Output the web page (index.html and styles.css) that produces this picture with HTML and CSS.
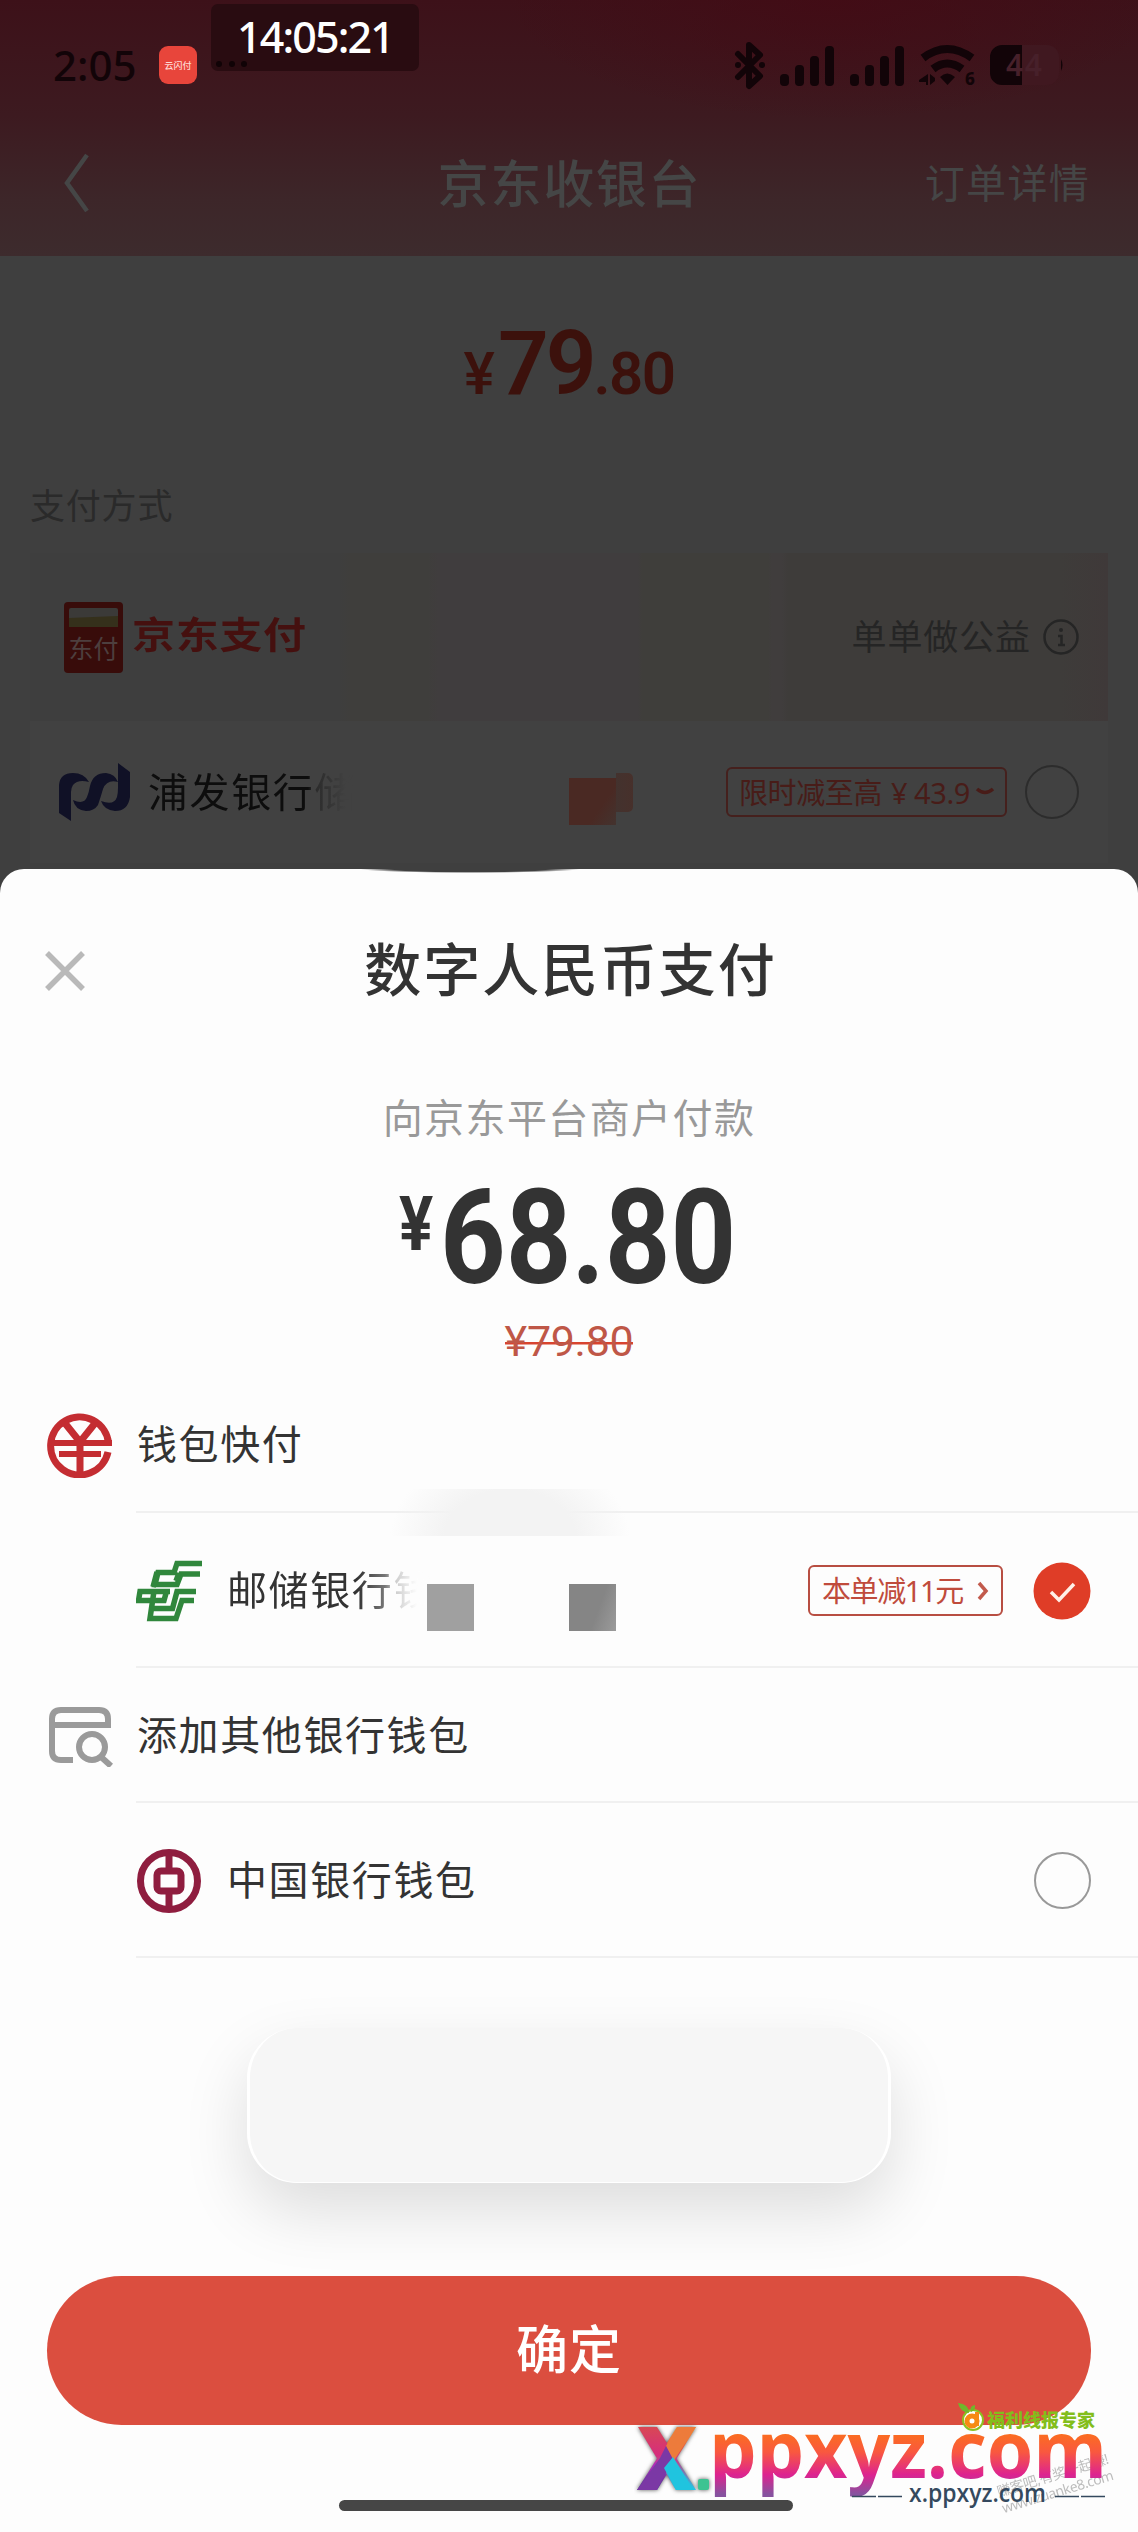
FILE: index.html
```html
<!DOCTYPE html>
<html lang="zh-CN">
<head>
<meta charset="utf-8">
<title>数字人民币支付</title>
<link rel="stylesheet" href="styles.css">
</head>
<body>
<main class="screen">
  <header class="top">
    <div class="status">
      <span class="status-time">2:05</span>
      <span class="app-badge">云闪付</span>
      <svg class="status-icons" width="332" height="50" viewBox="733 40 332 50" fill="#120408">
        <path d="M738 54l22 22-11 10V45l11 10-22 22" fill="none" stroke="#120408" stroke-width="6" stroke-linejoin="round" stroke-linecap="round"/>
        <circle cx="738" cy="65" r="3"/><circle cx="762" cy="65" r="3"/>
        <rect x="780" y="74" width="9" height="12" rx="4"/><rect x="795" y="65" width="9" height="21" rx="4"/><rect x="810" y="56" width="9" height="30" rx="4"/><rect x="825" y="46" width="9" height="40" rx="4"/>
        <rect x="850" y="74" width="9" height="12" rx="4"/><rect x="865" y="65" width="9" height="21" rx="4"/><rect x="880" y="56" width="9" height="30" rx="4"/><rect x="895" y="46" width="9" height="40" rx="4"/>
        <path d="M923 58q24-18 49 0M933 69q14-11 29 0" fill="none" stroke="#120408" stroke-width="8"/>
        <path d="M940 77q7-7 15 0l-7.500 8zM928 74v11h-2v-3h-7v-2zM930 74l5 4v-2l0 5-5 4z"/>
        <text x="965" y="85" font-size="17" font-weight="800">6</text>
        <rect x="990" y="45" width="69" height="40" rx="12" fill="#401820"/>
        <path d="M1022 45h-20a12 12 0 0 0-12 12v16a12 12 0 0 0 12 12h20zM1061 59q3 6 0 12z"/>
        <text x="1006" y="76" font-size="30" font-weight="600" fill="#47202a" textLength="36">44</text>
      </svg>
      <div class="clock">14:05:21</div>
      <svg class="dots" width="34" height="8" viewBox="0 0 34 8"><circle cx="4" cy="4" r="3"/><circle cx="17" cy="4" r="3"/><circle cx="29" cy="4" r="3"/></svg>
    </div>
    <nav class="nav">
      <svg class="back" width="30" height="62" viewBox="0 0 30 62"><path d="M25 3L5 31l20 28"/></svg>
      <h1>京东收银台</h1>
      <span class="nav-link">订单详情</span>
    </nav>
  </header>

  <div class="total"><span class="total-sign">¥</span><span class="total-int">79</span><span class="total-dec">.80</span></div>
  <div class="section-label">支付方式</div>

  <section class="methods">
    <div class="method jd">
      <svg class="jd-card" width="59" height="71" viewBox="0 0 59 71">
        <rect width="59" height="71" rx="4" fill="#380c0a"/>
        <rect x="5" y="6" width="49" height="19" rx="2" fill="#3b3a38"/><path d="M5 16l49-2v11H5z" fill="#35301b"/>
        <text x="4.500" y="56" font-size="25" fill="#4d3f3e" textLength="50">东付</text>
      </svg>
      <span class="jd-name">京东支付</span>
      <span class="charity">单单做公益</span>
      <svg class="info" width="38" height="38" viewBox="0 0 38 38"><circle cx="19" cy="19" r="16.500"/><path d="M16 18h3.500v8M16 27h7"/><circle class="info-dot" cx="19" cy="12" r="2"/></svg>
    </div>
    <div class="method spd">
      <svg class="spd-logo" width="72" height="60" viewBox="0 0 72 60" fill="#101126">
        <path d="M0 23Q1 11 14 11Q25 11 30 20Q19 17 14 23Q12 26 12 30V59L0 51z"/>
        <path d="M31 24Q34 11 47 11Q56 12 59 20Q48 17 44 27Q42 34 39 43Q35 49 27 49Q16 48 14 38Q25 43 28 35Q30 30 31 24z"/>
        <path d="M59 1l12 9v25Q69 49 56 49Q45 48 42 39Q55 44 58 35Q59 31 59 26z"/>
      </svg>
      <span class="spd-name">浦发银行储</span>
      <i class="smudge"></i>
      <span class="promo-dim">限时减至高<b>¥</b>43.9<svg width="20" height="12" viewBox="0 0 20 12"><path d="M2 3q8 7 16 0"/></svg></span>
      <i class="radio radio-dim"></i>
    </div>
  </section>

  <section class="sheet">
    <header class="sheet-head">
      <svg class="close" width="42" height="42" viewBox="0 0 42 42"><path d="M3 3l36 36M39 3L3 39"/></svg>
      <h2>数字人民币支付</h2>
    </header>
    <p class="payee">向京东平台商户付款</p>
    <div class="amount"><span class="amount-sign">¥</span><span class="amount-num">68.80</span></div>
    <div class="old"><span>¥79.80</span></div>

    <div class="row group quick">
      <svg class="logo" width="66" height="66" viewBox="0 0 66 66" fill="none" stroke="#c42d32">
        <path d="M61.500 31A29 29 0 1 0 61 40" stroke-width="7"/>
        <path d="M7 31h58M12 42h42" stroke-width="6"/><path d="M17 10l16 20L49 10M33 28v34" stroke-width="7"/>
      </svg>
      <span>钱包快付</span>
    </div>
    <div class="row bank psbc">
      <svg class="logo" width="66" height="62" viewBox="0 0 66 62" fill="none" stroke="#30873c" stroke-width="5.500">
        <path d="M66 3.500H41L38 12.500H22L19 24.500H41L45 14H64"/>
        <path d="M21 12l-4 15M40 21l3-8"/>
        <path d="M34 31.500H4L2.500 40.500H28L30.500 31.500M18 31l-4 27.500H40L46 40.500H58M60 31.500H41L36.500 48.500H17"/>
      </svg>
      <span class="psbc-name">邮储银行钱</span>
      <i class="haze"></i><i class="block block-a"></i><i class="block block-b"></i>
      <span class="promo">本单减11元<svg width="14" height="22" viewBox="0 0 14 22"><path d="M3 3l7 8-7 8"/></svg></span>
      <svg class="checked" width="58" height="58" viewBox="0 0 58 58"><circle cx="29" cy="29" r="28.500" fill="#df3d27"/><path d="M18 30l8 8 15-16" fill="none" stroke="#fff0e8" stroke-width="3.500"/></svg>
    </div>
    <div class="row group add">
      <svg class="logo" width="66" height="62" viewBox="0 0 66 62" fill="none" stroke="#9a9a9a" stroke-width="6">
        <path d="M26 55H14Q5 55 5 46V14Q5 5 14 5H52Q61 5 61 14V20H5"/><circle cx="45" cy="42" r="13"/><path d="M53 51l11 10"/>
      </svg>
      <span>添加其他银行钱包</span>
    </div>
    <div class="row bank boc">
      <svg class="logo" width="66" height="66" viewBox="0 0 66 66" fill="none" stroke="#8f1d3f">
        <circle cx="33" cy="33" r="28.500" stroke-width="7"/><rect x="21" y="23" width="24" height="20" rx="4" stroke-width="7"/><path d="M33 6v16M33 44v16" stroke-width="7"/>
      </svg>
      <span>中国银行钱包</span>
      <i class="radio"></i>
    </div>

    <div class="toast"></div>
    <button class="confirm">确定</button>
    <div class="home-bar"></div>
  </section>

  <svg class="stamp" width="504" height="140" viewBox="634 2392 504 140">
    <defs>
      <linearGradient id="brand" x1="0" y1="2434" x2="0" y2="2494" gradientUnits="userSpaceOnUse"><stop offset="0" stop-color="#fb6d20"/><stop offset=".3" stop-color="#f9583f"/><stop offset=".68" stop-color="#dd2390"/><stop offset="1" stop-color="#87529f"/></linearGradient>
      <linearGradient id="x-left" x1="0" y1="0" x2="0" y2="1"><stop offset="0" stop-color="#d84854"/><stop offset=".45" stop-color="#d62d7e"/><stop offset="1" stop-color="#20c8e8"/></linearGradient>
      <linearGradient id="x-right" x1="0" y1="0" x2="0" y2="1"><stop offset="0" stop-color="#ecb43a"/><stop offset=".35" stop-color="#ed493e"/><stop offset=".6" stop-color="#b22bbd"/><stop offset="1" stop-color="#453a91"/></linearGradient>
    </defs>
    <g class="tilted" transform="translate(999 2498) rotate(-17)"><text x="0" y="-1" textLength="116">赚客吧,有奖一起赚!</text><text x="0" y="16" textLength="116">www.zuanke8.com</text></g>
    <g class="mark-x">
      <path d="M677 2427h19l-39 63h-20z" fill="url(#x-right)"/><path d="M638 2427h19l39 63h-20z" fill="url(#x-left)"/>
      <path d="M677 2427h19l-23 35-7-16z" fill="#ed7b3b"/><path d="M666 2446l7 13-16 31h-20l23-32z" fill="#7b38a5"/><path d="M673 2457l21 33h-18l-12-22z" fill="#20c4df"/>
      <rect x="698" y="2479" width="11" height="11" rx="2" fill="#3dc392"/>
    </g>
    <text class="brand" x="709" y="2478" font-size="78" textLength="398" lengthAdjust="spacingAndGlyphs" fill="url(#brand)">ppxyz.com</text>
    <path d="M852 2496.500h24m2 0h24M1055 2496.500h24m2 0h24" stroke="#34495e" stroke-width="1.500"/>
    <text class="site" x="909" y="2502" font-size="25" textLength="137" lengthAdjust="spacingAndGlyphs">x.ppxyz.com</text>
    <circle cx="973" cy="2420" r="10" fill="#fff" stroke="#8bc220" stroke-width="2"/><circle cx="972" cy="2421" r="5" fill="none" stroke="#f78a13" stroke-width="5"/><path d="M977 2412v14" stroke="#f78a13" stroke-width="4"/>
    <path d="M958 2403q11 1 11 10-9-1-11-10zM971 2412q-2-6 4-7 1 5-4 7z" fill="#70b72b"/>
    <text class="guild" x="987" y="2427" font-size="18" textLength="108">福利线报专家</text>
  </svg>
</main>
</body>
</html>
```
FILE: styles.css
```css
* { box-sizing: border-box; }
body { margin: 0; }
h1, h2, p { margin: 0; font-weight: 400; }
i, b { font-style: normal; font-weight: 400; }
svg { display: block; flex: none; }

.screen {
  position: relative;
  width: 1138px;
  height: 2532px;
  overflow: hidden;
  background: #3f3f3f;
  color: #333;
  font-family: "Noto Sans", "Noto Sans CJK SC", sans-serif;
  line-height: 1;
  white-space: nowrap;
}

/* dimmed cashier page */
.top {
  height: 256px;
  background:
    radial-gradient(ellipse 330px 120px at 834px 0, rgba(68, 10, 20, .7), transparent),
    linear-gradient(#3d1119, #3d1a20 45%, #3d2629 78%, #3d2b2d);
}
.status {
  position: relative;
  display: flex;
  align-items: center;
  height: 110px;
  padding: 20px 73px 0 53px;
}
.status-time { width: 106px; color: #120408; font-size: 42px; font-weight: 500; }
.app-badge {
  width: 38px;
  height: 38px;
  border-radius: 9px;
  background: #e8453b;
  color: #ffd9d4;
  font-size: 9px;
  font-weight: 500;
  line-height: 39px;
  text-align: center;
}
.status-icons { margin-left: auto; }
.clock {
  position: absolute;
  left: 211px;
  top: 4px;
  width: 208px;
  height: 67px;
  border-radius: 7px;
  background: #290c11;
  color: #fff;
  font-size: 43px;
  font-weight: 500;
  letter-spacing: -1.9px;
  line-height: 66px;
  text-align: center;
}
.dots { position: absolute; left: 215px; top: 60px; fill: #100306; }
.nav {
  display: grid;
  grid-template-columns: 220px 1fr 220px;
  align-items: center;
  height: 146px;
  padding: 0 48px 0 62px;
  color: #454646;
}
.back path { fill: none; stroke: #454646; stroke-width: 4.5; }
.nav h1 { font-size: 51px; font-weight: 500; letter-spacing: 1.7px; text-align: center; padding-right: 13px; }
.nav-link { font-size: 40px; letter-spacing: 1.3px; text-align: right; }

.total {
  display: flex;
  align-items: baseline;
  justify-content: center;
  height: 190px;
  padding-top: 63px;
  color: #3c110c;
  font-family: Roboto, sans-serif;
  font-weight: 600;
}
.total-sign { font-size: 59px; font-weight: 500; }
.total-int { font-size: 89px; margin-left: 3px; letter-spacing: -3px; }
.total-dec { font-size: 60px; letter-spacing: -1.6px; }
.section-label {
  height: 107px;
  padding: 42px 30px 0;
  color: #2a2a2a;
  font-size: 35px;
  letter-spacing: .8px;
}
.methods { margin: 0 30px; height: 330px; }
.method { display: flex; align-items: center; }
.jd {
  height: 168px;
  padding: 0 28px 0 34px;
  background: linear-gradient(90deg, #3e3e3e 0 309px, #3f3e3c 320px 398px, #403d3e 408px 608px, #3f3e3b 612px 738px, #403d3d 742px 752px, #3e3c3a 758px 1030px, #3f3939);
}
.jd-name {
  margin: -5px 0 0 9px;
  color: #45100f;
  font-size: 43px;
  font-weight: 700;
  letter-spacing: .7px;
  transform: scaleY(.86);
}
.charity { margin: -2px 0 0 auto; color: #252525; font-size: 35px; letter-spacing: .9px; }
.info { margin-left: 11px; fill: none; stroke: #252525; stroke-width: 2.5; }
.info .info-dot { fill: #252525; stroke: none; }
.spd { position: relative; height: 142px; padding: 0 29px; background: #414141; }
.spd-name {
  margin-left: 17px;
  font-size: 40px;
  letter-spacing: 1.6px;
  color: transparent;
  background: linear-gradient(90deg, #0d0d0d 0 160px, #292929 165px, #414141 198px);
  background-clip: text;
}
.smudge {
  position: absolute;
  left: 539px;
  top: 57px;
  width: 47px;
  height: 47px;
  background: linear-gradient(125deg, #4a2923 65%, #43332f);
}
.smudge::after {
  content: "";
  position: absolute;
  left: 47px;
  top: -5px;
  width: 17px;
  height: 39px;
  border-radius: 0 5px 5px 0;
  background: linear-gradient(90deg, #43322e, #47302b);
}
.promo-dim {
  display: flex;
  align-items: center;
  width: 281px;
  height: 50px;
  margin: 0 18px 0 auto;
  padding-left: 11px;
  border: 2px solid #45201d;
  border-radius: 6px;
  color: #481c18;
  font-size: 29px;
  letter-spacing: -.4px;
}
.promo-dim b { width: 17px; margin: 0 6px 0 9px; }
.promo-dim svg { margin-left: 5px; fill: none; stroke: #481c18; stroke-width: 3.5; }
.radio { width: 57px; height: 57px; border: 2.5px solid #999; border-radius: 50%; }
.radio-dim { width: 54px; height: 54px; border-color: #2c2c2c; }

/* payment sheet */
.sheet {
  position: absolute;
  left: 0;
  top: 869px;
  width: 1138px;
  height: 1663px;
  border-radius: 24px 24px 0 0;
  background: radial-gradient(ellipse 110px 4px at 470px 0, #3f3f3f 70%, transparent) #fdfdfd;
}
.sheet-head {
  display: grid;
  grid-template-columns: 42px 1fr 42px;
  align-items: center;
  height: 204px;
  padding: 0 44px;
}
.close path { fill: none; stroke: #b9b9b9; stroke-width: 5.5; }
.sheet-head h2 { font-size: 57px; font-weight: 500; letter-spacing: 1.9px; text-align: center; margin: -3px 0 0 3px; }
.payee { height: 90px; padding-top: 25px; color: #999; font-size: 40px; letter-spacing: 1.4px; text-align: center; }
.amount {
  display: flex;
  width: 400px;
  height: 144px;
  padding: 10px 0 0 30px;
  margin-left: 369px;
  font-family: Roboto, sans-serif;
  font-weight: 700;
}
.amount-sign { width: 51px; margin-top: 9px; font-size: 76px; transform: scaleX(.84); transform-origin: left; line-height: 84px; height: 84px; }
.amount-num { font-size: 131px; transform: scaleX(.875); transform-origin: left; }
.old { height: 64px; padding-top: 13px; color: #bf5747; font: 43px/1 Roboto, sans-serif; text-align: center; letter-spacing: -.3px; }
.old span { background: linear-gradient(#d8442f, #d8442f) 0 26px / 100% 2.5px no-repeat; }
.row { position: relative; display: flex; align-items: center; font-size: 40px; letter-spacing: 1.6px; }
.row > span { margin-top: -2px; }
.row::after { content: ""; position: absolute; left: 136px; right: 0; bottom: 0; height: 2px; background: #f0f0f0; }
.group { padding-left: 47px; }
.group .logo { margin-right: 24px; }
.bank { padding: 0 47px 0 136px; }
.bank .logo { margin-right: 25px; }
.quick { height: 142px; padding-top: 5px; }
.psbc { height: 155px; }
.add { height: 135px; }
.boc { height: 155px; }
.boc .radio { margin-left: auto; }
.psbc-name {
  color: transparent;
  background: linear-gradient(90deg, #333 0 130px, #777 158px, #ccc 168px, #fdfdfd 190px);
  background-clip: text;
}
.block { position: absolute; top: 71px; width: 47px; height: 47px; }
.block-a { left: 427px; background: #a0a0a0; }
.block-b { left: 569px; background: linear-gradient(110deg, #858585 60%, #9b9b9b); }
.haze {
  position: absolute;
  z-index: 1;
  left: 390px;
  top: -24px;
  width: 240px;
  height: 47px;
  background: radial-gradient(ellipse 120px 90px at 50% 50px, #f3f3f3 55%, rgba(253, 253, 253, 0));
}
.row .promo {
  display: flex;
  align-items: center;
  width: 195px;
  height: 51px;
  margin: 0 30px 0 auto;
  padding-left: 12px;
  border: 2px solid #b84e42;
  border-radius: 6px;
  color: #c04b3c;
  font-size: 29px;
  letter-spacing: -1.4px;
}
.promo svg { margin-left: 13px; fill: none; stroke: #c25a4c; stroke-width: 3.5; }
.toast {
  width: 644px;
  height: 155px;
  margin: 70px auto 93px;
  border: 3px solid #fff;
  border-width: 0 3px 1px;
  border-radius: 50px;
  background: #f6f6f6;
  box-shadow: 0 28px 65px rgba(0, 0, 0, .13);
}
.confirm {
  display: block;
  width: 1044px;
  height: 149px;
  margin: 0 auto;
  padding: 0 0 3px;
  border: 0;
  border-radius: 75px;
  background: #db4e3f;
  color: #fff;
  font: 500 52px/1 "Noto Sans", "Noto Sans CJK SC", sans-serif;
  letter-spacing: 1px;
}
.home-bar { width: 454px; height: 11px; margin: 75px 0 0 339px; border-radius: 6px; background: #464646; }

.stamp { position: absolute; left: 634px; top: 2392px; }
.mark-x { filter: drop-shadow(0 0 2px #555); }
.brand { font-family: "Open Sans", sans-serif; font-weight: 700; }
.site { fill: #34495e; font-family: "Open Sans", sans-serif; font-weight: 600; }
.tilted { fill: #888; opacity: .55; font-size: 14px; }
.guild { fill: #83be1c; font-weight: 900; }
```
